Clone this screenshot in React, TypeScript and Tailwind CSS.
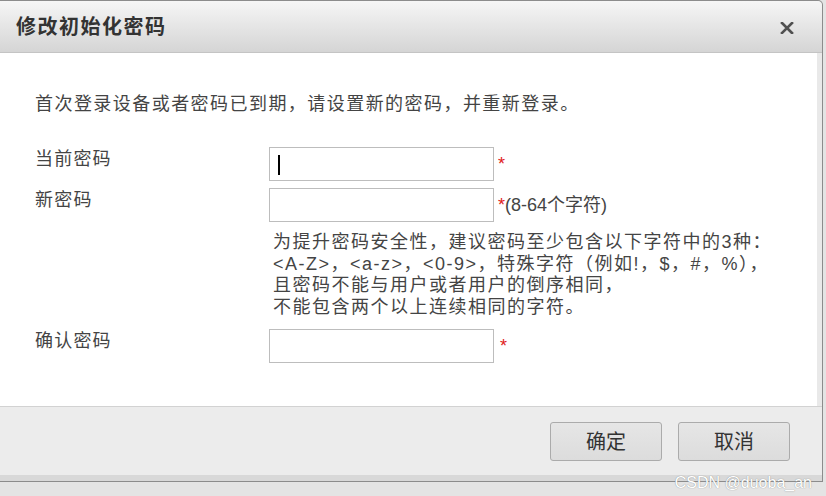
import React from "react";

const font = "font-['Liberation_Sans','Noto_Sans_CJK_SC',sans-serif]";

function Star() {
  return <span className="text-[18px] leading-[34px] text-[#e02020]">*</span>;
}

function Field({ label, caret }: { label: string; caret?: boolean }) {
  return (
    <div className="flex items-start">
      <div className="w-[234px] text-[18px] leading-[24px] tracking-[1.2px] text-[#444]">
        {label}
      </div>
      <div className="relative h-[34px] w-[225px] border border-[#bdbdbd] bg-white">
        {caret && (
          <span className="absolute left-[8px] top-[7px] h-[20px] w-[2px] bg-black" />
        )}
      </div>
    </div>
  );
}

export default function App() {
  return (
    <div className={`h-[496px] w-[826px] overflow-hidden bg-[#e4e4e4] ${font}`}>
      <div className="relative flex h-[482px] w-[823px] flex-col rounded-tr-[5px] border-t border-r border-b border-[#8c8c8c] bg-[#e9e9e9]">
        {/* header */}
        <div className="flex h-[52px] items-center justify-between rounded-tr-[5px] border-b border-[#c4c4c4] bg-gradient-to-b from-[#f6f6f6] to-[#d5d5d5] pl-[16px] pr-[28px]">
          <span className="text-[20px] font-bold tracking-[1.5px] text-[#333]">修改初始化密码</span>
          <svg width="14" height="12" viewBox="0 0 14 12" className="mt-[2px]">
            <path d="M2 1 L12 11 M12 1 L2 11" stroke="#505050" strokeWidth="2.6" strokeLinecap="square" />
          </svg>
        </div>

        {/* body */}
        <div className="mr-[5px] h-[353px] bg-white pl-[35px] pt-[39px] text-[#444]">
          <p className="text-[18px] leading-[24px] tracking-[1.45px]">
            首次登录设备或者密码已到期，请设置新的密码，并重新登录。
          </p>

          <div className="mt-[31px] flex flex-col">
            <div className="flex items-start">
              <Field label="当前密码" caret />
              <span className="ml-[4px]"><Star /></span>
            </div>

            <div className="mt-[7px] flex items-start">
              <Field label="新密码" />
              <span className="ml-[4px] text-[18px] leading-[34px] text-[#444]">
                <Star />(8-64个字符)
              </span>
            </div>

            <div className="ml-[238px] mt-[10px] text-[18px] leading-[21.7px] tracking-[1.5px] text-[#444]">
              <div>为提升密码安全性，建议密码至少包含以下字符中的3种：</div>
              <div>&lt;A-Z&gt;，&lt;a-z&gt;，&lt;0-9&gt;，特殊字符（例如!，$，#，%），</div>
              <div>且密码不能与用户或者用户的倒序相同，</div>
              <div>不能包含两个以上连续相同的字符。</div>
            </div>

            <div className="mt-[10px] flex items-start">
              <Field label="确认密码" />
              <span className="ml-[6px]"><Star /></span>
            </div>
          </div>
        </div>

        {/* footer */}
        <div className="flex flex-1 flex-col border-t border-[#d2d2d2] bg-[#ececec]">
          <div className="flex justify-end gap-[16px] pr-[32px] pt-[15px]">
            <button className="h-[39px] w-[112px] rounded-[3px] border border-[#ababab] bg-gradient-to-b from-[#e6e6e6] to-[#dcdcdc] text-[20px] text-[#333]">
              确定
            </button>
            <button className="h-[39px] w-[112px] rounded-[3px] border border-[#ababab] bg-gradient-to-b from-[#e6e6e6] to-[#dcdcdc] text-[20px] text-[#333]">
              取消
            </button>
          </div>
          <div className="mt-auto h-[6px] bg-[#d8d8d8]" />
        </div>

        <span className="absolute bottom-[-12px] right-[10px] text-[16px] leading-[20px] text-white [text-shadow:0_0_1px_#777]">
          CSDN @duoba_an
        </span>
      </div>
    </div>
  );
}
